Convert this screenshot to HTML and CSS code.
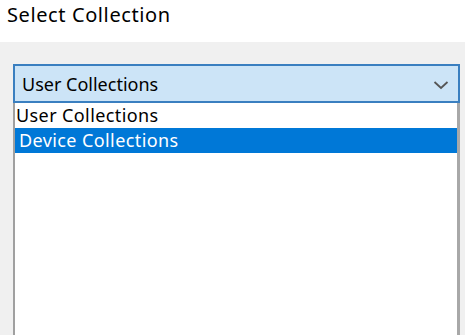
FILE: index.html
```html
<!DOCTYPE html>
<html lang="en">
<head>
<meta charset="UTF-8">
<meta name="viewport" content="width=device-width, initial-scale=1.0">
<title>Select Collection</title>
<link rel="stylesheet" href="styles.css">
</head>
<body>
  <div class="header">
    <h1 class="title">Select Collection</h1>
  </div>

  <div class="panel">
    <div class="combo">
      <span class="combo-text">User Collections</span>
      <svg class="chevron" width="16" height="10" viewBox="0 0 16 10">
        <path d="M1.5 2 L8 8 L14.5 2" fill="none" stroke="#555" stroke-width="1.8"/>
      </svg>
    </div>
    <ul class="list">
      <li class="item">User Collections</li>
      <li class="item selected">Device Collections</li>
    </ul>
  </div>
</body>
</html>
```

FILE: styles.css
```css
body {
  font-family: "Noto Sans", "Open Sans", sans-serif;
  margin: 0;
  padding: 0;
  height: 335px;
  overflow: hidden;
  display: flex;
  flex-direction: column;
  background-color: #f0f0f0;
}

.header {
  height: 42px;
  background-color: #fff;
  padding-left: 7px;
  box-sizing: border-box;
}

.title {
  margin: 0;
  padding-top: 1px;
  font-size: 20px;
  letter-spacing: 0.6px;
  font-weight: normal;
  color: #000;
  line-height: 28px;
}

.panel {
  flex: 1;
  display: flex;
  flex-direction: column;
  padding: 22px 5px 0 13px;
  min-height: 0;
}

.combo {
  height: 39px;
  box-sizing: border-box;
  border: 2px solid #3a7fc0;
  background-color: #cce4f7;
  display: flex;
  align-items: center;
  justify-content: space-between;
  padding: 0 9px 0 7px;
}

.combo-text {
  font-size: 18px;
  color: #000;
}

.chevron {
  display: block;
  margin-top: 2px;
}

.list {
  flex: 1;
  list-style: none;
  margin: 0;
  padding: 0;
  background-color: #fff;
  border-left: 2px solid #a0a0a0;
  border-right: 3px solid #a8a8a8;
}

.item {
  height: 25px;
  line-height: 25px;
  font-size: 18px;
  letter-spacing: 0.4px;
  padding-left: 1px;
  color: #000;
}

.item.selected {
  background-color: #0078d7;
  color: #fff;
  padding-left: 4px;
}
```
